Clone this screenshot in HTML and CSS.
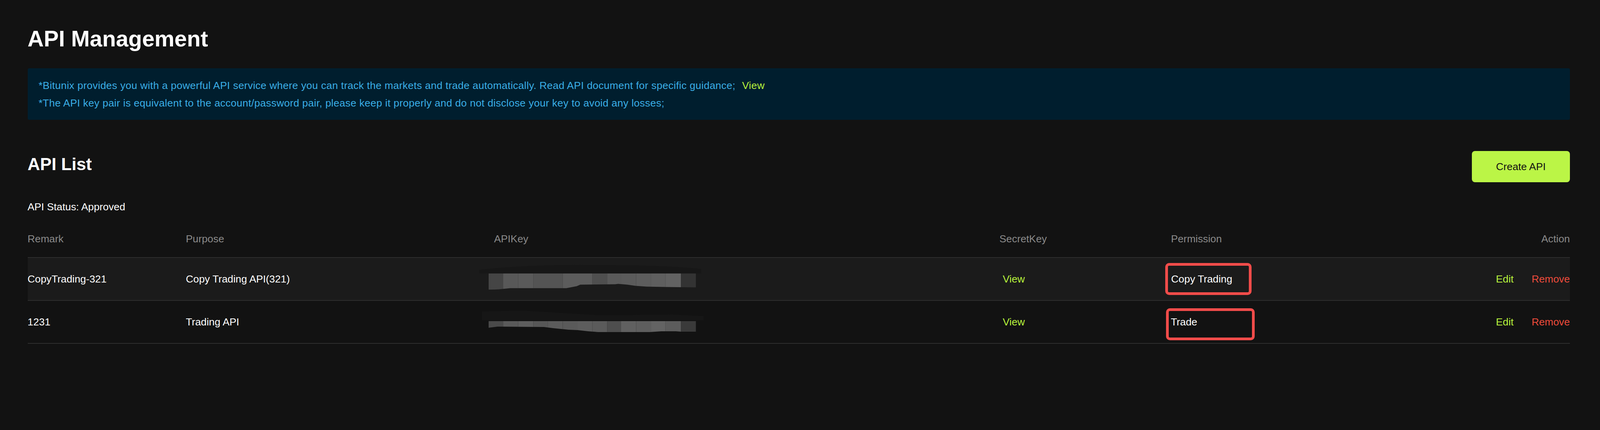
FILE: index.html
```html
<!DOCTYPE html>
<html lang="en">
  <head>
    <meta charset="UTF-8" />
    <meta name="viewport" content="width=device-width, initial-scale=1.0" />
    <title>API Management</title>
    <link rel="stylesheet" href="styles.css">
  </head>
  <body>
    <div class="page">
      <h1 class="page-title">API Management</h1>

      <div class="notice">
        <p>*Bitunix provides you with a powerful API service where you can track the markets and trade automatically. Read API document for specific guidance; <a class="notice-link">View</a></p>
        <p>*The API key pair is equivalent to the account/password pair, please keep it properly and do not disclose your key to avoid any losses;</p>
      </div>

      <div class="list-head">
        <h2 class="list-title">API List</h2>
        <button class="button-create">Create API</button>
      </div>

      <div class="status">API Status: Approved</div>

      <div class="table">
        <div class="row row-head">
          <div>Remark</div>
          <div>Purpose</div>
          <div>APIKey</div>
          <div>SecretKey</div>
          <div>Permission</div>
          <div class="cell-action">Action</div>
        </div>

        <div class="row row-item row-active">
          <div>CopyTrading-321</div>
          <div>Copy Trading API(321)</div>
          <div class="cell-key">
            <svg class="key-mask" viewBox="-25 -25.5 610 80" preserveAspectRatio="none">
              <defs>
                <clipPath id="mask1">
                  <path d="M0 0 H565 V36 L484 35 L430 34 L400 32 L378 29 L353 27 L345 28 L250 29 L240 33 L212 38 L59 38 L28 41 L0 42 Z" />
                </clipPath>
              </defs>
              <path d="M-25 0 V-9 Q120 -24 300 -21 Q470 -22 579 -11 V0 Z" fill="#171717" />
              <g clip-path="url(#mask1)">
                <rect x="0" y="0" width="40" height="45" fill="#454545" />
                <rect x="40" y="0" width="41" height="45" fill="#585858" />
                <rect x="81" y="0" width="41" height="45" fill="#5a5a5a" />
                <rect x="122" y="0" width="80" height="45" fill="#545454" />
                <rect x="202" y="0" width="81" height="45" fill="#5c5c5c" />
                <rect x="283" y="0" width="40" height="45" fill="#4f4f4f" />
                <rect x="323" y="0" width="38" height="45" fill="#5a5a5a" />
                <rect x="361" y="0" width="41" height="45" fill="#5b5b5b" />
                <rect x="402" y="0" width="40" height="45" fill="#5d5d5d" />
                <rect x="442" y="0" width="40" height="45" fill="#5f5f5f" />
                <rect x="482" y="0" width="42" height="45" fill="#626262" />
                <rect x="524" y="0" width="41" height="45" fill="#333333" />
              </g>
            </svg>
          </div>
          <div><a class="link-view">View</a></div>
          <div><span class="perm-box">Copy Trading</span></div>
          <div class="cell-action">
            <a class="link-edit">Edit</a>
            <a class="link-remove">Remove</a>
          </div>
        </div>

        <div class="row row-item">
          <div>1231</div>
          <div>Trading API</div>
          <div class="cell-key">
            <svg class="key-mask" viewBox="-25 -38 610 80" preserveAspectRatio="none">
              <defs>
                <clipPath id="mask2">
                  <path d="M0 0 H565 V27 L524 27 L510 26 L471 26 L439 28 L299 28 L271 26 L243 23 L218 22 L176 18 L151 15 L25 14 L0 17 Z" />
                </clipPath>
              </defs>
              <path d="M-18 -2 V-25 L95 -27 L305 -15 L502 -17 L586 -13 V-2 Z" fill="#161616" />
              <g clip-path="url(#mask2)">
                <rect x="0" y="0" width="40" height="30" fill="#4a4a4a" />
                <rect x="40" y="0" width="41" height="30" fill="#5a5a5a" />
                <rect x="81" y="0" width="41" height="30" fill="#5e5e5e" />
                <rect x="122" y="0" width="40" height="30" fill="#575757" />
                <rect x="162" y="0" width="40" height="30" fill="#5b5b5b" />
                <rect x="202" y="0" width="41" height="30" fill="#5a5a5a" />
                <rect x="243" y="0" width="40" height="30" fill="#5d5d5d" />
                <rect x="283" y="0" width="40" height="30" fill="#5b5b5b" />
                <rect x="323" y="0" width="38" height="30" fill="#4e4e4e" />
                <rect x="361" y="0" width="41" height="30" fill="#606060" />
                <rect x="402" y="0" width="40" height="30" fill="#5e5e5e" />
                <rect x="442" y="0" width="40" height="30" fill="#636363" />
                <rect x="482" y="0" width="42" height="30" fill="#5c5c5c" />
                <rect x="524" y="0" width="41" height="30" fill="#3a3a3a" />
              </g>
            </svg>
          </div>
          <div><a class="link-view">View</a></div>
          <div><span class="perm-box perm-box-low">Trade</span></div>
          <div class="cell-action">
            <a class="link-edit">Edit</a>
            <a class="link-remove">Remove</a>
          </div>
        </div>
      </div>
    </div>
  </body>
</html>
```

FILE: styles.css
```css
:root {
  --bg-color: #121212;
  --row-active-color: #1b1b1b;
  --line-color: #2e2e2e;
  --muted-color: #8a8a8a;
  --white-color: #ffffff;
  --notice-bg-color: #001e2e;
  --notice-text-color: #3aaee6;
  --lime-color: #b8f23c;
  --button-color: #bbf546;
  --red-color: #ee4b3b;
  --mark-color: #f24c4a;
  /* one px of the 4356px wide design, follows the window width */
  --u: calc(100vw / 4356);
}

body {
  margin: 0;
  background-color: var(--bg-color);
  color: var(--white-color);
  font-family: "Liberation Sans", Arial, sans-serif;
}

.page {
  padding: 69px calc(82 * var(--u)) 0 calc(75 * var(--u));
}

.page-title {
  margin: 0;
  font-size: calc(61 * var(--u));
  line-height: 61px;
  font-weight: bold;
}

.notice {
  margin-top: 45px;
  padding: 22px calc(30 * var(--u)) 20px;
  background-color: var(--notice-bg-color);
  border-radius: 4px;
  color: var(--notice-text-color);
  font-size: calc(28 * var(--u));
  letter-spacing: calc(0.35 * var(--u));
  line-height: 45px;
}

.notice p {
  margin: 0;
}

.notice-link {
  color: var(--lime-color);
  margin-left: calc(10 * var(--u));
  cursor: pointer;
}

.list-head {
  display: flex;
  justify-content: space-between;
  align-items: flex-start;
  margin-top: 80px;
}

.list-title {
  margin: 10px 0 0;
  font-size: calc(47 * var(--u));
  line-height: 47px;
  font-weight: bold;
}

.button-create {
  width: calc(267 * var(--u));
  height: 80px;
  border: none;
  border-radius: 8px;
  background-color: var(--button-color);
  color: #111111;
  font-family: "Liberation Sans", Arial, sans-serif;
  font-size: calc(28 * var(--u));
  cursor: pointer;
}

.status {
  margin-top: 43px;
  font-size: calc(28 * var(--u));
  line-height: 40px;
}

.table {
  margin-top: 42px;
}

.row {
  display: grid;
  grid-template-columns:
    calc(431 * var(--u)) calc(839 * var(--u)) calc(1376 * var(--u))
    calc(467 * var(--u)) 1fr auto;
  align-items: center;
  font-size: calc(28 * var(--u));
  line-height: 40px;
}

.row-head {
  color: var(--muted-color);
  padding-bottom: 27px;
}

.row-item {
  height: 108px;
  border-top: 2px solid var(--line-color);
}

.row-item:last-child {
  border-bottom: 2px solid var(--line-color);
}

.row-active {
  background-color: var(--row-active-color);
}

.cell-key {
  display: flex;
  align-items: center;
}

.key-mask {
  display: block;
  width: calc(610 * var(--u));
  height: 80px;
  margin-left: calc(-40 * var(--u));
}

.cell-action {
  justify-self: end;
  display: flex;
  gap: calc(49 * var(--u));
}

.link-view,
.link-edit {
  color: var(--lime-color);
  cursor: pointer;
}

.link-view {
  margin-left: calc(9 * var(--u));
}

.link-remove {
  color: var(--red-color);
  cursor: pointer;
}

/* red marks drawn round the permission values */
.perm-box {
  display: flex;
  align-items: center;
  box-sizing: border-box;
  width: calc(235 * var(--u));
  height: 82px;
  margin-left: calc(-16 * var(--u));
  padding-left: calc(9 * var(--u));
  border: 7px solid var(--mark-color);
  border-radius: 10px;
}

.perm-box-low {
  width: calc(242 * var(--u));
  margin-left: calc(-14 * var(--u));
  margin-top: 12px;
  padding-left: calc(6 * var(--u));
  padding-bottom: 12px;
}
```
